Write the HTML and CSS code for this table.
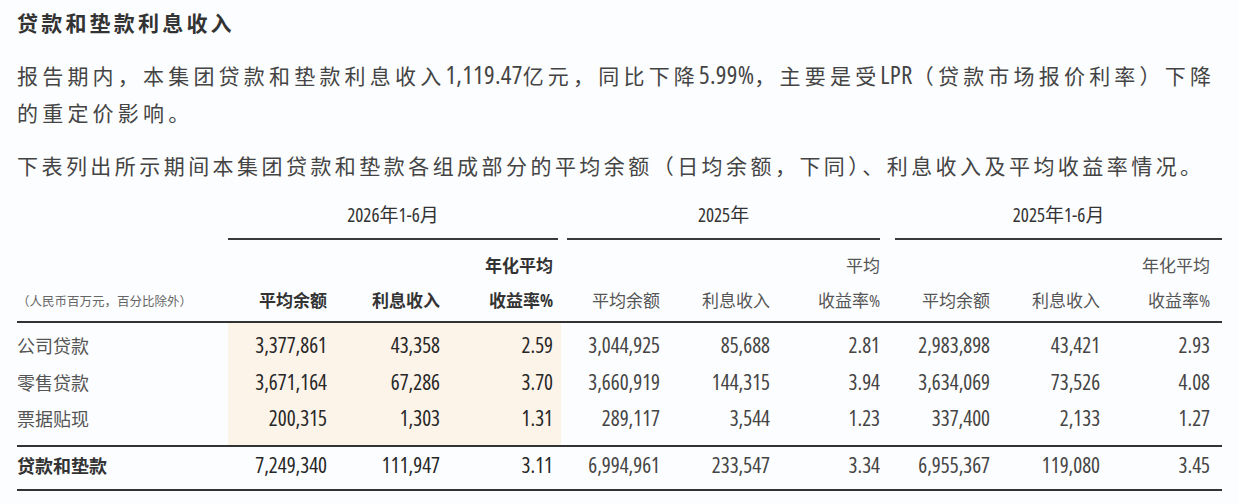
FILE: index.html
```html
<!DOCTYPE html>
<html lang="zh-CN">
<head>
<meta charset="utf-8">
<title>贷款和垫款利息收入</title>
<link rel="stylesheet" href="styles.css">
</head>
<body>
<div class="page">
  <h2 class="title">贷款和垫款利息收入</h2>
  <p class="para p1">报告期内，本集团贷款和垫款利息收入<span class="lat">1,119.47</span>亿元，同比下降<span class="lat">5.99%</span>，主要是受<span class="lat">LPR</span>（贷款市场报价利率）下降<br>的重定价影响。</p>
  <p class="para p2">下表列出所示期间本集团贷款和垫款各组成部分的平均余额（日均余额，下同）、利息收入及平均收益率情况。</p>
  <table class="tbl">
    <colgroup>
      <col class="c-label">
      <col class="c-w107"><col class="c-w113"><col class="c-w113">
      <col class="c-w107"><col class="c-w110"><col class="c-w110">
      <col class="c-w110"><col class="c-w110"><col class="c-w114">
    </colgroup>
    <thead>
      <tr class="grp-row">
        <th></th>
        <th colspan="3" class="grp"><div class="grp-line g1">2026年1-6月</div></th>
        <th colspan="3" class="grp"><div class="grp-line g2">2025年</div></th>
        <th colspan="3" class="grp"><div class="grp-line g3">2025年1-6月</div></th>
      </tr>
      <tr class="sub-row">
        <th class="unit">（人民币百万元，百分比除外）</th>
        <th class="strong">平均余额</th>
        <th class="strong">利息收入</th>
        <th class="strong">年化平均<br>收益率%</th>
        <th>平均余额</th>
        <th>利息收入</th>
        <th>平均<br>收益率%</th>
        <th>平均余额</th>
        <th>利息收入</th>
        <th class="last">年化平均<br>收益率%</th>
      </tr>
    </thead>
    <tbody>
      <tr class="first">
        <td class="label">公司贷款</td>
        <td class="hl strong">3,377,861</td><td class="hl strong">43,358</td><td class="hl strong">2.59</td>
        <td>3,044,925</td><td>85,688</td><td>2.81</td>
        <td>2,983,898</td><td>43,421</td><td class="last">2.93</td>
      </tr>
      <tr>
        <td class="label">零售贷款</td>
        <td class="hl strong">3,671,164</td><td class="hl strong">67,286</td><td class="hl strong">3.70</td>
        <td>3,660,919</td><td>144,315</td><td>3.94</td>
        <td>3,634,069</td><td>73,526</td><td class="last">4.08</td>
      </tr>
      <tr class="lastrow">
        <td class="label">票据贴现</td>
        <td class="hl strong">200,315</td><td class="hl strong">1,303</td><td class="hl strong">1.31</td>
        <td>289,117</td><td>3,544</td><td>1.23</td>
        <td>337,400</td><td>2,133</td><td class="last">1.27</td>
      </tr>
    </tbody>
    <tfoot>
      <tr class="total">
        <td class="label">贷款和垫款</td>
        <td class="strong">7,249,340</td><td class="strong">111,947</td><td class="strong">3.11</td>
        <td>6,994,961</td><td>233,547</td><td>3.34</td>
        <td>6,955,367</td><td>119,080</td><td class="last">3.45</td>
      </tr>
    </tfoot>
  </table>
</div>
</body>
</html>
```
FILE: styles.css
```css
html, body {
  margin: 0;
  padding: 0;
  background: #fcfdfe;
}

body {
  font-family: "Noto Sans CJK SC", "Noto Sans", sans-serif;
  color: #3c3c3c;
}

.page {
  width: 1238px;
  height: 504px;
  box-sizing: border-box;
  padding: 7px 4px 0 17px;
  border-left: 3px solid #eef0f2;
  margin-left: -3px;
  overflow: hidden;
}

.title {
  margin: 0;
  font-size: 21px;
  line-height: 30px;
  font-weight: 700;
  letter-spacing: 3.2px;
  color: #333;
}

.para {
  margin: 19.5px 0 0;
  font-size: 21px;
  line-height: 37px;
  letter-spacing: 3.45px;
  color: #444;
  white-space: nowrap;
}

.para.p1 {
  letter-spacing: 4.2px;
}

.para.p2 {
  margin-top: 16px;
}

.lat {
  font-family: "Open Sans", "Noto Sans", sans-serif;
  font-size: 25px;
  font-stretch: 82%;
  letter-spacing: 0.3px;
  line-height: 1;
}

.tbl {
  margin-top: 0.5px;
  width: 1205px;
  table-layout: fixed;
  border-collapse: collapse;
  border-spacing: 0;
  font-family: "Open Sans", "Noto Sans CJK SC", sans-serif;
  font-stretch: 80%;
  color: #444;
}

.c-label { width: 211px; }
.c-w107 { width: 107px; }
.c-w110 { width: 110px; }
.c-w113 { width: 113px; }
.c-w114 { width: 114px; }

.tbl th,
.tbl td {
  padding: 0 8px 0 0;
  text-align: right;
  white-space: nowrap;
}

.grp-row th {
  padding: 19px 0 0 0;
  vertical-align: bottom;
}

.grp-line {
  font-size: 19px;
  line-height: 24px;
  font-weight: 400;
  text-align: center;
  color: #333;
  padding-bottom: 11px;
  border-bottom: 2px solid #3a3a3a;
}

.grp-line.g1 { margin-right: 3px; }
.grp-line.g2 { margin-left: 6px; margin-right: 8px; }
.grp-line.g3 { margin-left: 7px; }

.sub-row th {
  padding: 7.5px 8px 3.5px 0;
  font-size: 17px;
  line-height: 35px;
  font-weight: 400;
  color: #555;
  vertical-align: bottom;
  border-bottom: 2px solid #333;
}

.sub-row th.strong {
  font-weight: 700;
  color: #333;
}

.sub-row th.unit {
  text-align: left;
  font-size: 12.5px;
  color: #666;
  font-family: "Noto Sans CJK SC", sans-serif;
}

.tbl th.last,
.tbl td.last {
  padding-right: 12px;
}

.tbl td {
  font-size: 21px;
  line-height: 36.5px;
  color: #444;
}

.tbl td.label {
  text-align: left;
  font-family: "Noto Sans CJK SC", sans-serif;
  font-size: 18px;
  color: #555;
}

.tbl td.strong {
  color: #262626;
  font-weight: 500;
}

.tbl td.hl {
  background: #fcf3e9;
}

.tbl tr.first td {
  padding-top: 4px;
}

.tbl tr.lastrow td {
  padding-bottom: 8px;
}

.tbl tr.total td {
  line-height: 36px;
  padding-bottom: 6px;
  border-top: 2px solid #333;
  border-bottom: 2px solid #333;
}

.tbl tr.total td.label {
  font-weight: 700;
  color: #333;
}
```
